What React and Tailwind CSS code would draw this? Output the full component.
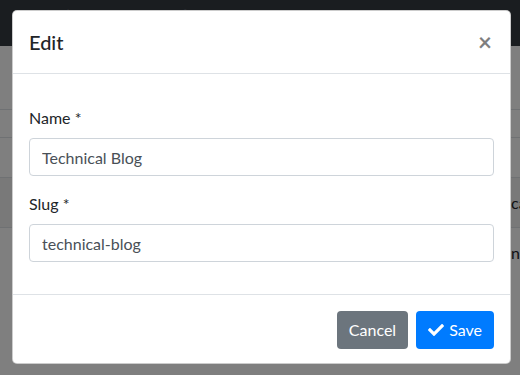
import React from "react";

const CheckIcon = () => (
  <svg viewBox="0 0 512 512" className="w-4 h-4 fill-current" aria-hidden="true">
    <path d="M173.898 439.404l-166.4-166.4c-9.997-9.997-9.997-26.206 0-36.204l36.203-36.204c9.997-9.998 26.207-9.998 36.204 0L192 312.69 432.095 72.596c9.997-9.997 26.207-9.997 36.204 0l36.203 36.204c9.997 9.997 9.997 26.206 0 36.204l-294.4 294.401c-9.998 9.997-26.207 9.997-36.204-.001z" />
  </svg>
);

const Field = ({ label, value }) => (
  <div className="mb-4">
    <label className="block mb-2 leading-6">{label}</label>
    <input
      type="text"
      defaultValue={value}
      className="block w-full h-[38px] px-3 border border-[#ced4da] rounded text-[#495057] bg-white outline-none"
    />
  </div>
);

const App = () => {
  return (
    <div className="relative w-[520px] h-[375px] overflow-hidden bg-white text-[#212529] font-['Segoe_UI','Lato',sans-serif] text-base">
      {/* page behind the modal */}
      <nav className="h-[46px] bg-[#343a40] text-[#9a9da0] flex gap-[60px] pl-[62px] pt-[3px] text-base">
        <span>⌂ Home</span>
        <span>✎ Administration</span>
        <span>▭ Blogs</span>
      </nav>
      <div className="h-[63px]"></div>
      <div className="border-t border-[#dee2e6] h-[28px]"></div>
      <div className="border-t border-[#dee2e6] h-[40px]"></div>
      <div className="border-t border-[#dee2e6] h-[50px] bg-[#f2f2f2] flex items-center pl-[511px] whitespace-nowrap">
        ca
      </div>
      <div className="border-t border-[#dee2e6] h-[50px] flex items-center pl-[511px] whitespace-nowrap">
        n
      </div>

      {/* backdrop + dialog */}
      <div className="absolute inset-0 bg-black/50">
        <div className="ml-[12px] mt-[10px] w-[499px] bg-white rounded-[5px] border border-black/20">
          <div className="flex items-center justify-between px-4 py-4 border-b border-[#dee2e6]">
            <h5 className="text-xl font-medium leading-[30px]">Edit</h5>
            <button className="text-2xl font-bold leading-none text-black opacity-50 mr-[2px]">×</button>
          </div>
          <div className="px-4 pt-8 pb-4">
            <Field label="Name *" value="Technical Blog" />
            <Field label="Slug *" value="technical-blog" />
          </div>
          <div className="flex justify-end gap-2 px-4 pt-4 pb-[14px] border-t border-[#dee2e6]">
            <button className="h-[38px] px-3 rounded bg-[#6c757d] text-white">Cancel</button>
            <button className="h-[38px] px-3 rounded bg-[#007bff] text-white flex items-center gap-[5px]">
              <CheckIcon />
              Save
            </button>
          </div>
        </div>
      </div>
    </div>
  );
};

export default App;
